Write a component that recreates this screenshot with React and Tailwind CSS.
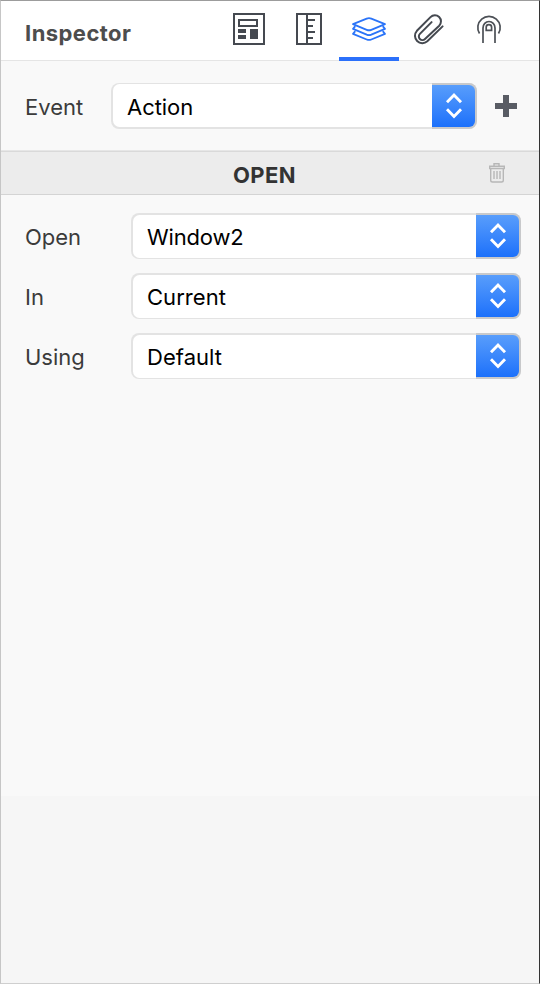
import React from "react";

const TemplateIcon = () => (
  <svg width="60" height="57" viewBox="0 0 60 57" fill="none" shapeRendering="crispEdges">
    <rect x="15" y="14" width="30" height="30" stroke="#454950" strokeWidth="2" />
    <rect x="20" y="20" width="18" height="6" stroke="#454950" strokeWidth="2" />
    <path d="M19 29h8v4h-8zM19 35h8v4h-8zM31 29h8v10h-8z" fill="#454950" />
  </svg>
);

const RulerIcon = () => (
  <svg width="60" height="57" viewBox="0 0 60 57" fill="none" stroke="#454950" strokeWidth="2" shapeRendering="crispEdges">
    <path d="M18 14h24v30H18zM28 14v30M28 20h8M28 26h6M28 32h8M28 38h6" />
  </svg>
);

const LayersIcon = () => (
  <svg width="60" height="57" viewBox="0 0 60 57" fill="none" stroke="#2b74f8" strokeWidth="1.8" strokeLinejoin="round">
    <path d="M14 24.2 27.7 18.6Q30 17.7 32.3 18.6L46 24.2 32.3 29.8Q30 30.7 27.7 29.8Z" />
    <path d="M16.3 26.2 14 28.8 27.7 34.7Q30 35.6 32.3 34.7L46 28.8 43.7 26.2" />
    <path d="M16.3 31.2 14 33.8 27.7 39.5Q30 40.4 32.3 39.5L46 33.8 43.7 31.2" />
  </svg>
);

const ClipIcon = () => (
  <svg width="60" height="57" viewBox="0 0 60 57" fill="none" stroke="#454950" strokeWidth="2" strokeLinecap="round">
    <path d="M43.6 26.4 28.3 41.3A7.4 7.4 0 0 1 17.9 30.8L31.5 17.1A6.1 6.1 0 0 1 40.2 25.7L26 39A3.6 3.6 0 0 1 20.9 33.9L32.6 22.1" />
  </svg>
);

const TouchIcon = () => (
  <svg width="60" height="57" viewBox="0 0 60 57" fill="none" stroke="#4c5056" strokeWidth="1.7">
    <path d="M20.5 33.5A11.2 11.2 0 1 1 39.5 33.5" />
    <path d="M24 43V28a6 6.5 0 0 1 12 0v15" />
    <path d="M27.2 30.3v-3.1a2.7 2.5 0 0 1 5.4 0v3.1z" />
  </svg>
);

const tabs = [TemplateIcon, RulerIcon, LayersIcon, ClipIcon, TouchIcon];

function Select({ value, className = "", textClass = "tracking-[0.05px]" }) {
  return (
    <div className={`flex h-[46px] rounded-[8px] bg-[#e3e3e3] p-[1.5px] ${className}`}>
      <div
        className={`flex flex-1 items-center rounded-l-[6.5px] bg-white pt-[2px] pl-[14.5px] text-[22px] text-black ${textClass}`}
      >
        {value}
      </div>
      <div className="-my-[1.5px] -mr-[1.5px] w-[45px] rounded-r-[8px] bg-[#c8c9cb] py-[2px] pr-[2px]">
        <svg
          className="h-[42px] w-[43px] rounded-r-[6px] bg-linear-to-b from-[#589dfb] to-[#1b70fb]"
          viewBox="0 0 43 42"
          fill="none"
          stroke="white"
          strokeWidth="2.9"
        >
          <path d="m15 17.2 7-7.1 7 7.1M15 24.3l7 7.1 7-7.1" />
        </svg>
      </div>
    </div>
  );
}

const rows = [
  ["Open", "Window2"],
  ["In", "Current"],
  ["Using", "Default"],
];

export default function App() {
  return (
    <div className="flex h-[984px] w-[540px] flex-col border border-t-[#9c9c9c] border-r-[#333] border-b-[#cfcfcf] border-l-[#c6c6c6] bg-[#f6f6f6] font-['Inter',sans-serif] text-[22px] text-[#3b3b3b]">
      <header className="flex h-[60px] shrink-0 border-b border-[#e5e5e5] bg-white">
        <h1 className="w-[218px] pt-[16px] pl-[24px] text-[22px] leading-[32px] font-bold tracking-[0.45px] text-[#4d4d4d]">
          Inspector
        </h1>
        {tabs.map((Icon, i) => (
          <button
            key={i}
            className={`-mt-px h-[61px] w-[60px] border-b-4 ${i === 2 ? "border-[#2b70fa]" : "border-transparent"}`}
          >
            <span className="block h-[57px]">
              <Icon />
            </span>
          </button>
        ))}
      </header>
      <main className="h-[735px] shrink-0 bg-[#f9f9f9]">
        <div className="flex h-[89px] items-center pl-[24px]">
          <span className="w-[86px] pt-[4px]">Event</span>
          <Select value="Action" className="w-[366px]" textClass="pt-[4px] tracking-[-0.05px]" />
          <svg className="ml-[18px]" width="22" height="22" viewBox="0 0 22 22" shapeRendering="crispEdges">
            <path d="M8 0h6v8h8v6h-8v8H8v-8H0V8h8z" fill="#595c64" />
          </svg>
        </div>
        <div className="border-t border-[#e6e6e6]">
          <div className="flex h-[44px] items-center border-y border-t-[#d9d9d9] border-b-[#d4d4d4] bg-[#ececec] pl-[232px]">
            <h2 className="w-[255px] pt-[4px] font-bold tracking-[0.4px] text-[#333]">OPEN</h2>
            <svg width="18" height="22" viewBox="0 0 18 22" fill="none" stroke="#b7b7b7" strokeWidth="1.4">
              <path d="M6 4V1.7h5V4M1.7 4.2h14.6v2.3H1.7zM2.7 6.5v11.7q0 1.8 1.8 1.8h9q1.8 0 1.8-1.8V6.5M6 9v8M9 9v8M12 9v8" />
            </svg>
          </div>
        </div>
        <div className="flex flex-col gap-[14px] pt-[18px] pl-[24px]">
          {rows.map(([label, value]) => (
            <div key={label} className="flex items-center">
              <span className="w-[106px] pt-[3px]">{label}</span>
              <Select value={value} className="w-[390px]" textClass={value === "Window2" ? "tracking-[-0.15px]" : "tracking-[0.05px]"} />
            </div>
          ))}
        </div>
      </main>
    </div>
  );
}
